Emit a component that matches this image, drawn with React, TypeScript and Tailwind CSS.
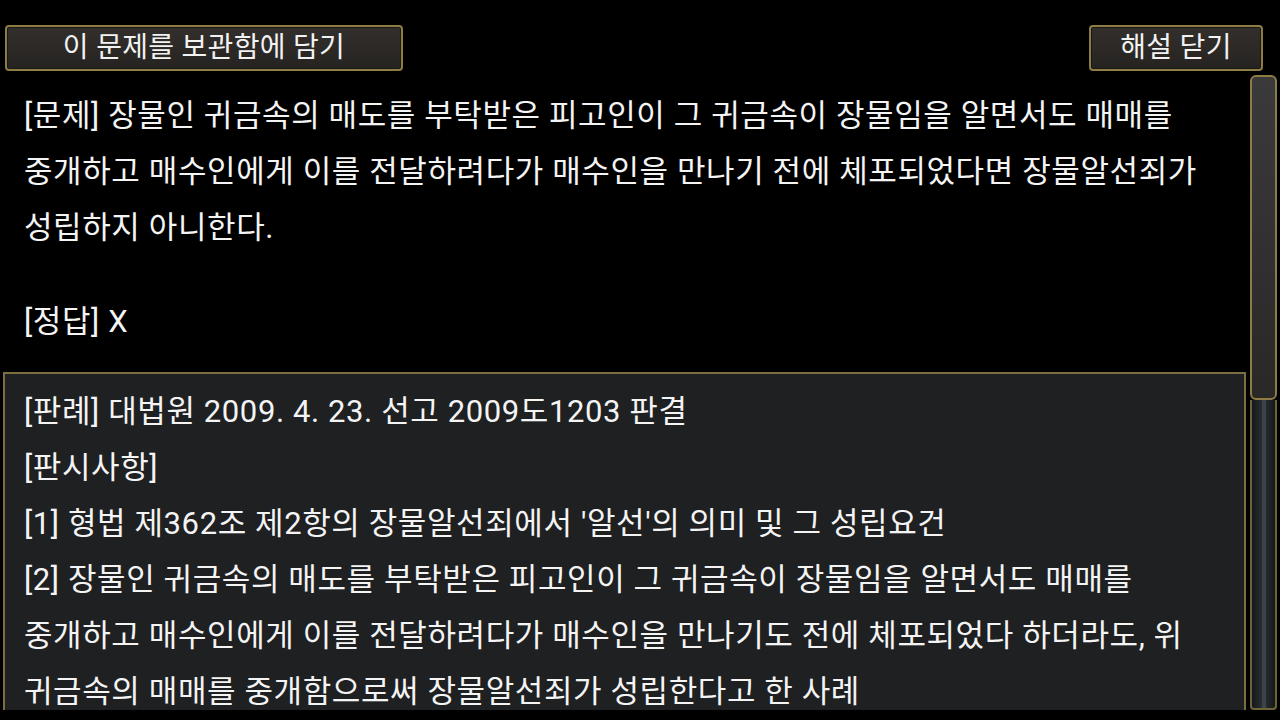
const lines1 = [
  '[문제] 장물인 귀금속의 매도를 부탁받은 피고인이 그 귀금속이 장물임을 알면서도 매매를',
  '중개하고 매수인에게 이를 전달하려다가 매수인을 만나기 전에 체포되었다면 장물알선죄가',
  '성립하지 아니한다.',
];

const lines2 = [
  '[판례] 대법원 2009. 4. 23. 선고 2009도1203 판결',
  '[판시사항]',
  "[1] 형법 제362조 제2항의 장물알선죄에서 '알선'의 의미 및 그 성립요건",
  '[2] 장물인 귀금속의 매도를 부탁받은 피고인이 그 귀금속이 장물임을 알면서도 매매를',
  '중개하고 매수인에게 이를 전달하려다가 매수인을 만나기도 전에 체포되었다 하더라도, 위',
  '귀금속의 매매를 중개함으로써 장물알선죄가 성립한다고 한 사례',
];

function GoldButton({ label, className }: { label: string; className: string }) {
  return (
    <button
      className={`h-[46px] rounded-[4px] border-2 border-[#8e7c45] bg-gradient-to-b from-[#332f2c] to-[#252321] text-[28px] leading-none tracking-[0.3px] text-[#f2f2f2] shadow-[inset_0_0_0_1px_#1a1815] ${className}`}
    >
      {label}
    </button>
  );
}

export default function App() {
  return (
    <div
      className="relative h-[720px] w-[1280px] overflow-hidden bg-black text-[#f4f4f4]"
      style={{ fontFamily: 'Roboto, "Noto Sans CJK KR", sans-serif' }}
    >
      <div className="flex h-[75px] items-start justify-between pt-[25px] pl-[5px] pr-[17px]">
        <GoldButton label="이 문제를 보관함에 담기" className="w-[398px]" />
        <GoldButton label="해설 닫기" className="w-[174px]" />
      </div>

      <div className="flex h-[635px]">
        <div className="w-[1246px] overflow-hidden">
          <div className="pl-[24px] pt-[13px] text-[31px] leading-[56px] tracking-[0.6px]">
            {lines1.map((l) => (
              <div key={l} className="whitespace-nowrap">{l}</div>
            ))}
            <div className="mt-[38px] whitespace-nowrap">[정답] X</div>
          </div>

          <div className="ml-[3px] mt-[22px] h-[340px] border-2 border-[#7d6e42] bg-[#1f2022] pl-[19px] pt-[10px] text-[31px] leading-[56px] tracking-[0.6px]">
            {lines2.map((l) => (
              <div key={l} className="whitespace-nowrap">{l}</div>
            ))}
          </div>
        </div>

        <div className="ml-[4px] flex w-[27px] flex-col">
          <div className="h-[325px] rounded-[6px] border-2 border-[#8e7c45] bg-gradient-to-b from-[#3b3a3b] to-[#2a2727]" />
          <div className="flex h-[310px] justify-center rounded-b-[4px] border-x-2 border-b-2 border-[#6f6237] bg-gradient-to-r from-[#15191c] via-[#2a3034] to-[#15191c]">
            <div className="w-[4px] bg-[#3c4247]" />
          </div>
        </div>
      </div>
    </div>
  );
}
